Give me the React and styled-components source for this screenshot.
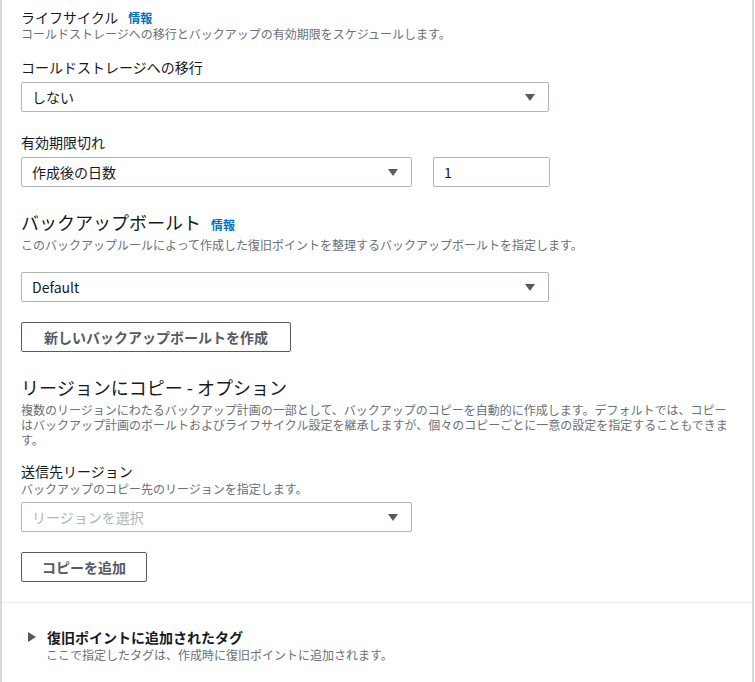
import React from 'react';
import styled, { createGlobalStyle } from 'styled-components';

const GlobalStyle = createGlobalStyle`
  body {
    margin: 0;
    background: #ffffff;
    font-family: "Noto Sans CJK JP", "Noto Sans", sans-serif;
    color: #16191f;
  }
`;

// Layout

const Card = styled.div`
  box-sizing: border-box;
  width: 754px;
  min-height: 682px;
  border-left: 2px solid #d5dbdb;
  border-right: 2px solid #d5dbdb;
  background: #ffffff;
`;

const Body = styled.div`
  padding: 8px 19px 20px;
  display: flex;
  flex-direction: column;
  align-items: flex-start;
`;

const Block = styled.div`
  display: flex;
  flex-direction: column;
  align-items: flex-start;
  width: 100%;
  margin-top: ${(p) => p.$mt || 0}px;
`;

const TitleRow = styled.div`
  display: flex;
  align-items: baseline;
  column-gap: 10px;
`;

const Title = styled.h2`
  margin: 0;
  font-weight: 400;
  font-size: ${(p) => (p.$large ? 18 : 14)}px;
  line-height: ${(p) => (p.$large ? 24 : 18)}px;
  color: #16191f;
`;

const InfoLink = styled.a`
  font-size: 12px;
  font-weight: 700;
  color: #0073bb;
  text-decoration: none;
  cursor: pointer;
`;

const Description = styled.p`
  margin: ${(p) => p.$mt || 0}px 0 0;
  font-size: 12px;
  line-height: ${(p) => p.$lh || 16}px;
  color: #687078;
`;

const Label = styled.label`
  font-size: 14px;
  line-height: 20px;
  color: #16191f;
`;

const Row = styled.div`
  display: flex;
  column-gap: 21px;
  margin-top: 5px;
`;

const SelectBox = styled.div`
  box-sizing: border-box;
  display: flex;
  align-items: center;
  justify-content: space-between;
  width: ${(p) => p.$width}px;
  height: 30px;
  margin-top: ${(p) => p.$mt || 0}px;
  padding: 0 13px 0 10px;
  border: 1px solid #aab7b8;
  border-radius: 2px;
  font-size: 14px;
  color: ${(p) => (p.$placeholder ? '#aab7b8' : '#16191f')};
  cursor: pointer;
`;

const TextInput = styled.input`
  box-sizing: border-box;
  width: 117px;
  height: 30px;
  padding: 0 10px;
  border: 1px solid #aab7b8;
  border-radius: 2px;
  font-family: inherit;
  font-size: 14px;
  color: #16191f;
  outline: none;
`;

const Button = styled.button`
  box-sizing: border-box;
  height: 30px;
  margin-top: 20px;
  padding: 0 ${(p) => p.$pad || 20}px;
  border: 1px solid #545b64;
  border-radius: 2px;
  background: #ffffff;
  font-family: inherit;
  font-size: 14px;
  font-weight: 700;
  color: #545b64;
  cursor: pointer;
`;

const Footer = styled.div`
  border-top: 1px solid #eaeded;
  padding: 24px 19px 20px 26px;
`;

const ExpanderHeader = styled.div`
  display: flex;
  align-items: center;
  column-gap: 11px;
  cursor: pointer;
`;

const ExpanderTitle = styled.span`
  font-size: 14px;
  font-weight: 700;
  line-height: 20px;
  color: #16191f;
`;

const ExpanderBody = styled.div`
  padding-left: 18px;
`;

const Caret = () => (
  <svg width="10" height="7" viewBox="0 0 10 7">
    <polygon points="0,0 10,0 5,7" fill="#545b64" />
  </svg>
);

const Arrow = () => (
  <svg width="8" height="10" viewBox="0 0 8 10">
    <polygon points="0,0 8,5 0,10" fill="#545b64" />
  </svg>
);

const Select = ({ width, value, placeholder, mt }) => (
  <SelectBox $width={width} $mt={mt} $placeholder={!value}>
    <span>{value || placeholder}</span>
    <Caret />
  </SelectBox>
);

export default function App() {
  return (
    <>
      <GlobalStyle />
      <Card>
        <Body>
          <Block>
            <TitleRow>
              <Title>ライフサイクル</Title>
              <InfoLink>情報</InfoLink>
            </TitleRow>
            <Description>
              コールドストレージへの移行とバックアップの有効期限をスケジュールします。
            </Description>
          </Block>

          <Block $mt={15}>
            <Label>コールドストレージへの移行</Label>
            <Select width={528} value="しない" mt={5} />
          </Block>

          <Block $mt={20}>
            <Label>有効期限切れ</Label>
            <Row>
              <Select width={391} value="作成後の日数" />
              <TextInput defaultValue="1" />
            </Row>
          </Block>

          <Block $mt={23}>
            <TitleRow>
              <Title $large>バックアップボールト</Title>
              <InfoLink>情報</InfoLink>
            </TitleRow>
            <Description $mt={3}>
              このバックアップルールによって作成した復旧ポイントを整理するバックアップボールトを指定します。
            </Description>
            <Select width={528} value="Default" mt={19} />
            <Button $pad={22}>新しいバックアップボールトを作成</Button>
          </Block>

          <Block $mt={23}>
            <Title $large>リージョンにコピー - オプション</Title>
            <Description $mt={3} $lh={15}>
              複数のリージョンにわたるバックアップ計画の一部として、バックアップのコピーを自動的に作成します。デフォルトでは、コピーはバックアップ計画のボールトおよびライフサイクル設定を継承しますが、個々のコピーごとに一意の設定を指定することもできます。
            </Description>
          </Block>

          <Block $mt={14}>
            <Label>送信先リージョン</Label>
            <Description>バックアップのコピー先のリージョンを指定します。</Description>
            <Select width={391} placeholder="リージョンを選択" mt={5} />
            <Button>コピーを追加</Button>
          </Block>
        </Body>

        <Footer>
          <ExpanderHeader>
            <Arrow />
            <ExpanderTitle>復旧ポイントに追加されたタグ</ExpanderTitle>
          </ExpanderHeader>
          <ExpanderBody>
            <Description>ここで指定したタグは、作成時に復旧ポイントに追加されます。</Description>
          </ExpanderBody>
        </Footer>
      </Card>
    </>
  );
}
